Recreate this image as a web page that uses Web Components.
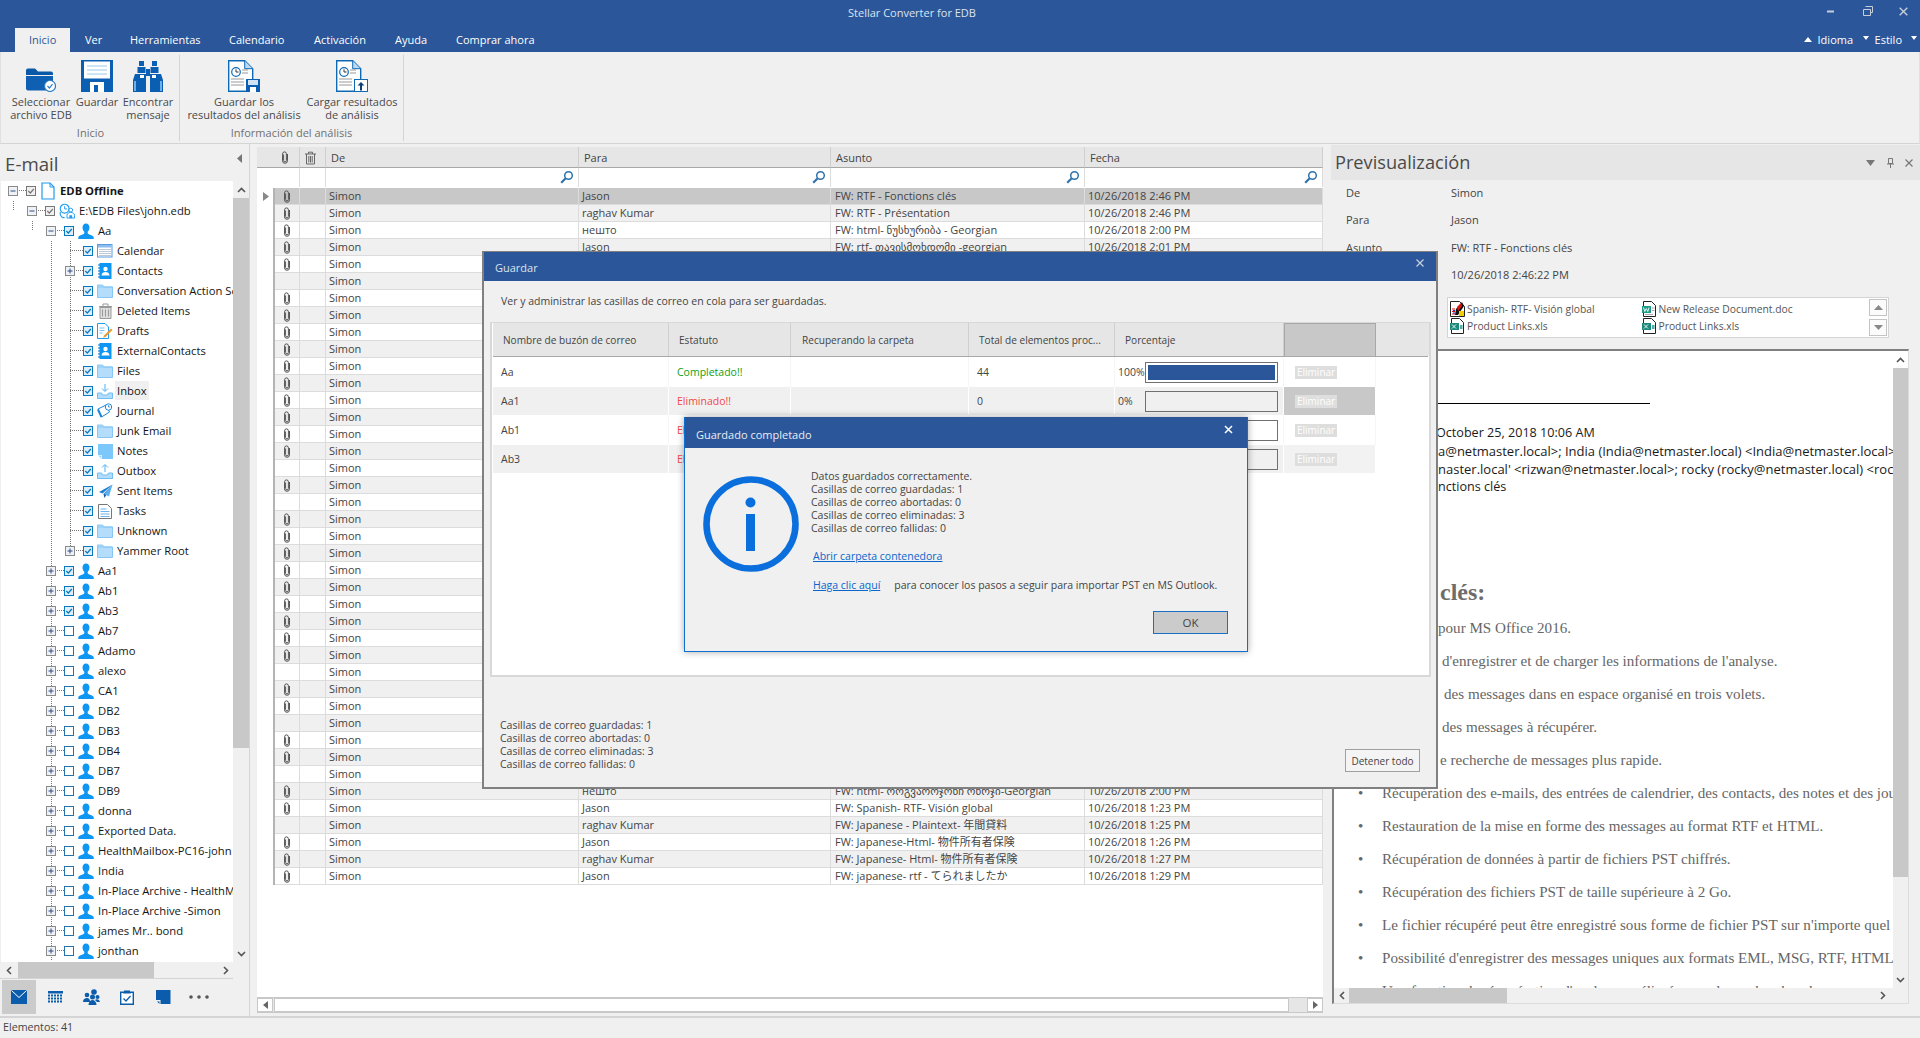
<!DOCTYPE html>
<html><head><meta charset="utf-8"><title>Stellar Converter for EDB</title>
<style>html,body{margin:0;height:100%;overflow:hidden;background:#f0f0f0}</style></head>
<body>
<app-window></app-window>
<script>
const I = {
 chevU:'<svg width="9" height="6" viewBox="0 0 9 6"><path d="M1 5l3.5-3.5L8 5" fill="none" stroke="#555" stroke-width="1.6"/></svg>',
 chevD:'<svg width="9" height="6" viewBox="0 0 9 6"><path d="M1 1l3.5 3.5L8 1" fill="none" stroke="#555" stroke-width="1.6"/></svg>',
 chevL:'<svg width="6" height="9" viewBox="0 0 6 9"><path d="M5 1L1.5 4.5 5 8" fill="none" stroke="#555" stroke-width="1.6"/></svg>',
 chevR:'<svg width="6" height="9" viewBox="0 0 6 9"><path d="M1 1l3.5 3.5L1 8" fill="none" stroke="#555" stroke-width="1.6"/></svg>',
 clip:'<svg width="8" height="13" viewBox="0 0 8 13"><path d="M2.6 3.5v6a1.3 1.3 0 0 0 2.8 0V2.8a1.9 1.9 0 0 0-3.8 0l-.1 7a2.5 2.5 0 0 0 5 0V3" fill="none" stroke="#555" stroke-width="1"/></svg>',
 trash:'<svg width="13" height="14" viewBox="0 0 13 14"><path d="M1 3h11M4.5 3V1.200h4V3M2.500 3v10h8V3M4.800 5v6.500M6.500 5v6.500M8.200 5v6.500" fill="none" stroke="#666" stroke-width="1"/></svg>',
 mag:'<svg width="14" height="14" viewBox="0 0 14 14"><circle cx="8.500" cy="5.500" r="3.800" fill="#fff" stroke="#2f73ad" stroke-width="1.500"/><path d="M5.500 8.500L1.200 12.800" stroke="#2f73ad" stroke-width="2.200"/></svg>',
 person:'<svg width="16" height="17" viewBox="0 0 16 17"><path d="M8 0.500c2.200 0 3.500 1.700 3.500 4 0 1.800-.8 3.500-1.800 4.300v1.200c0 .6 1 1.200 3 1.900 1.800.7 3 1.400 3 2.300V16H.300v-1.800c0-.9 1.200-1.600 3-2.300 2-.7 3-1.300 3-1.900V8.800c-1-.8-1.800-2.500-1.800-4.300 0-2.300 1.300-4 3.500-4z" fill="#0f96f2"/></svg>',
 folder:'<svg width="16" height="14" viewBox="0 0 16 14"><path d="M.500 1h5l1.500 2h8.500v10.500H.500z" fill="#b4dcfb" stroke="#86c7f8"/><path d="M.500 3h15" stroke="#86c7f8"/></svg>',
 calendar:'<svg width="16" height="14" viewBox="0 0 16 14"><rect x=".500" y=".500" width="14.500" height="12.500" fill="#fff" stroke="#5b9be0"/><rect x="1" y="1" width="13.500" height="2.500" fill="#8ebcf0"/><path d="M2.500 5.500h11M2.500 7.500h11M2.500 9.500h11M2.500 11.500h11" stroke="#7d8fb0" stroke-dasharray="1 1"/></svg>',
 contacts:'<svg width="14" height="16" viewBox="0 0 14 16"><rect x="1.500" y="0" width="12" height="16" fill="#0f96f2"/><path d="M0 2h2M0 5h2M0 8h2M0 11h2M0 14h2" stroke="#0a6fc0"/><circle cx="7.500" cy="6" r="2.200" fill="#fff"/><path d="M3.500 12.500c0-2.500 2-3.500 4-3.500s4 1 4 3.500z" fill="#fff"/></svg>',
 trashG:'<svg width="15" height="16" viewBox="0 0 15 16"><path d="M1 3h13l-.2 1.500H1.200z" fill="#999"/><path d="M5 3V1h5v2" fill="none" stroke="#999"/><path d="M2 4.500h11V15.500H2z" fill="#ddd" stroke="#999"/><path d="M4.500 6.500v7M7.500 6.500v7M10.500 6.500v7" stroke="#999"/></svg>',
 drafts:'<svg width="16" height="16" viewBox="0 0 16 16"><path d="M.500.500h7.500l3.500 3.500v11.500h-11z" fill="#fff" stroke="#1f9cf0"/><path d="M2.500 5h5M2.500 7.500h5M2.500 10h3" stroke="#7cc0f5"/><path d="M14 5.500l1.500 1.500-7 7-2.300.8.800-2.300z" fill="#ef9a2e"/></svg>',
 inbox:'<svg width="16" height="15" viewBox="0 0 16 15"><path d="M8 0v7M5 4.500L8 7.500l3-3" fill="none" stroke="#4cb0f5" stroke-width="1"/><path d="M.500 9h4l1 2h5l1-2h4v5.500H.500z" fill="#b4dcfb" stroke="#6fbdf7"/></svg>',
 journal:'<svg width="16" height="16" viewBox="0 0 16 16"><path d="M1 6l8-4 3.500 7-8 5z" fill="#fff" stroke="#1c86d8"/><path d="M1 6.500l3.500 7.500" stroke="#1c86d8" stroke-width="2"/><circle cx="11.500" cy="4" r="3.200" fill="#fff" stroke="#1c86d8"/><path d="M11.500 2.200V4h1.600" fill="none" stroke="#1c86d8" stroke-width=".8"/></svg>',
 notes:'<svg width="15" height="15" viewBox="0 0 15 15"><path d="M0 0h15v15H4V11H0z" fill="#7cc8fb"/><path d="M0 11.500h3.500V15z" fill="#a8dafc"/></svg>',
 outbox:'<svg width="16" height="15" viewBox="0 0 16 15"><path d="M8 8V1M5 3.500L8 .5l3 3" fill="none" stroke="#4cb0f5"/><path d="M.500 9h4l1 2h5l1-2h4v5.500H.500z" fill="#b4dcfb" stroke="#6fbdf7"/></svg>',
 sent:'<svg width="15" height="15" viewBox="0 0 15 15"><path d="M14.500.500L1 8l3.500 1.500z" fill="#1d7fd0"/><path d="M14.500.500L5.500 10l1 4z" fill="#0f5ca0"/><path d="M14.500.500L6 10l5 2.500z" fill="#5fb0ef"/></svg>',
 tasks:'<svg width="14" height="15" viewBox="0 0 14 15"><path d="M.500.500h9l4 4v10h-13z" fill="#fff" stroke="#777"/><path d="M2.500 5h6M2.500 7.500h9M2.500 10h9M2.500 12.500h9" stroke="#6ab4ef"/></svg>',
 page:'<svg width="14" height="18" viewBox="0 0 14 18"><path d="M1 1h8l4 4v12H1z" fill="#fff" stroke="#1f9cf0" stroke-width="1.200"/><path d="M9 1v4h4" fill="none" stroke="#1f9cf0"/></svg>',
 edb:'<svg width="17" height="16" viewBox="0 0 17 16"><circle cx="6" cy="5.500" r="4.700" fill="#fff" stroke="#1f9cf0" stroke-width="1.200"/><path d="M6 2.800v3h2.500" fill="none" stroke="#1f9cf0"/><path d="M1.500 9c-1 2 .5 5 2.500 6h2" fill="none" stroke="#1f9cf0" stroke-width="1.200"/><circle cx="12.500" cy="7" r="2" fill="#fff" stroke="#1f9cf0"/><path d="M8.500 15.500v-3c0-2 2-3 4-3s4 1 4 3v3z" fill="#fff" stroke="#1f9cf0"/><path d="M11 15.500v-3h3v3" fill="#1f9cf0"/></svg>',
 rfolder:'<svg width="30" height="24" viewBox="0 0 30 24"><path d="M0 2.500Q0 .5 2 .5h7l3 3h13q2 0 2 2V7H0z" fill="#0a58a8"/><path d="M0 8h27v14.500H2q-2 0-2-2z" fill="#0f5fb2"/><circle cx="24" cy="18" r="5.500" fill="#fff" stroke="#2c7dc4" stroke-width="1.200"/><path d="M21.500 18l2 2 3-3.800" fill="none" stroke="#2c7dc4" stroke-width="1.200"/></svg>',
 rsave:'<svg width="32" height="32" viewBox="0 0 32 32"><path d="M0 0h32v32H0z" fill="#0b5fb3"/><rect x="3" y="1.500" width="26" height="17" fill="#fff"/><path d="M6 6h20M6 10h20M6 14h20" stroke="#9cc9ea" stroke-width="1.200"/><rect x="9" y="22" width="14" height="10" fill="#fff"/><rect x="13" y="25" width="4" height="7" fill="#0b5fb3"/></svg>',
 rbino:'<svg width="32" height="31" viewBox="0 0 32 31"><path d="M7 0h5v5h-5zM20 0h5v5h-5z" fill="#0b5fb3"/><path d="M5.500 6h8v6h-8zM18.500 6h8v6h-8z" fill="#0b5fb3"/><path d="M14 8h4v7h-4z" fill="#0b5fb3"/><path d="M3 13h11v18H1V19z" fill="#0b5fb3"/><path d="M18 13h11l2 6v12H18z" fill="#0b5fb3"/><path d="M3 20v10M29 20v10" stroke="#6fb0e8" stroke-width="2"/><path d="M8 14h4v3H8zM20 14h4v3h-4z" fill="#fff"/></svg>',
 rdoc(k){return `<svg width="32" height="32" viewBox="0 0 32 32"><path d="M.700.700h16l8 8V31.300H.700z" fill="#fff" stroke="#0f6ab5" stroke-width="1.400"/><path d="M16.700.700v8h8" fill="#bcd9f0" stroke="#0f6ab5"/><circle cx="8" cy="12" r="4.300" fill="#fff" stroke="#0f6ab5" stroke-width="1.200"/><path d="M8 9.300V12h2.500" fill="none" stroke="#333"/><path d="M14 10h6M14 13h6M3 19h13M3 22h13M3 25h13" stroke="#9a9a9a" stroke-width="1.200"/>${k=='s'
  ?'<rect x="18" y="19" width="14" height="13" fill="#0b5fb3"/><rect x="20" y="20" width="10" height="5" fill="#cfe5f5"/><rect x="22" y="27" width="6" height="5" fill="#fff"/>'
  :'<rect x="18.500" y="19.500" width="13" height="12" fill="#fff" stroke="#0f6ab5"/><path d="M25 22l-3.500 3.500H24v5h2v-5h2.500z" fill="#0b3f7a"/>'}</svg>`},
 navMail:'<svg width="16" height="14" viewBox="0 0 16 14"><path d="M0 0h16v14H0z" fill="#0b5cad"/><path d="M.500.500L8 7.500 15.500.500" fill="none" stroke="#fff"/></svg>',
 navCal:'<svg width="15" height="13" viewBox="0 0 15 13"><path d="M0 0h15v2.500H0z" fill="#0b5cad"/><path d="M0 4.500h15M0 7.500h15M0 10.500h15" stroke="#0b5cad" stroke-width="2" stroke-dasharray="2 1"/></svg>',
 navPpl:'<svg width="17" height="16" viewBox="0 0 17 16"><circle cx="11" cy="3" r="2.800" fill="#0b5cad"/><circle cx="4" cy="6" r="2.300" fill="#0b5cad"/><circle cx="9.500" cy="8" r="2.500" fill="#0b5cad"/><circle cx="14.500" cy="8" r="2" fill="#0b5cad"/><path d="M0 13c0-3 2-4 4-4s3 1 3 4zM5.500 16c0-3 2-5 4-5s4 2 4 5zM12 11c1-1 4-1.500 5 2h-3z" fill="#0b5cad"/></svg>',
 navTask:'<svg width="14" height="15" viewBox="0 0 14 15"><path d="M.700 2.200h12.600v12.100H.700z" fill="#fff" stroke="#0b5cad" stroke-width="1.400"/><path d="M4 2V.500h6V2l1 1.500H3z" fill="#0b5cad"/><path d="M3.500 8.500l2.500 2.500 4.500-5" fill="none" stroke="#0b5cad" stroke-width="1.300"/></svg>',
 navNote:'<svg width="15" height="14" viewBox="0 0 15 14"><path d="M0 0h14.500v14H4.500v-4H0z" fill="#0b5cad"/><path d="M1 11.500h2.500V14z" fill="#0b5cad"/></svg>',
 navDots:'<svg width="20" height="4" viewBox="0 0 20 4"><circle cx="2" cy="2" r="1.800" fill="#555"/><circle cx="10" cy="2" r="1.800" fill="#555"/><circle cx="18" cy="2" r="1.800" fill="#555"/></svg>',
 attRtf:'<svg width="15" height="16" viewBox="0 0 15 16"><path d="M.500.500h9l5 5V15.500H.500z" fill="#fff" stroke="#222"/><path d="M6 8l6-7 2 4-6 9H5z" fill="#111"/><path d="M7 6l4-4 1 3-4 5z" fill="#e01010"/><path d="M2 8h3M2 10.500h3M2 13h3" stroke="#e01010"/><path d="M9 10h5v5H9z" fill="#f0d000"/><path d="M3 9.500h2M3 12h2" stroke="#1030d0"/></svg>',
 attDoc:'<svg width="15" height="16" viewBox="0 0 15 16"><path d="M1.500.500h8l4 4V15.500h-12z" fill="#fff" stroke="#222"/><rect x="0" y="5" width="9" height="7" fill="#1d9b86"/><path d="M1.500 6.500l1.300 4 1.500-3 1.500 3 1.300-4" fill="none" stroke="#fff" stroke-width=".9"/><path d="M10 7h2.500M10 9.500h2.500M3 13.500h8" stroke="#aaa"/></svg>',
 attXls:'<svg width="15" height="16" viewBox="0 0 15 16"><path d="M1.500.500h8l4 4V15.500h-12z" fill="#fff" stroke="#222"/><rect x="0" y="5" width="9" height="7" fill="#1d8a7a"/><path d="M2 6.500l4 4M6 6.500l-4 4" stroke="#fff" stroke-width=".9"/><path d="M10 7h2.500v4H10z" fill="#5aa" /></svg>'
};
function def(name, render){
  customElements.define(name, class extends HTMLElement{
    constructor(){super();this.attachShadow({mode:'open'});}
    connectedCallback(){this.shadowRoot.innerHTML=render(this);}
  });
}
def('title-bar',()=>`<style>
:host{display:block;background:#2b579a;height:52px;color:#fff;font-size:11px;flex:none}
.top{display:flex;height:28px;align-items:center;color:#dbe3ef}
.t{margin-left:848px;width:130px;white-space:nowrap;margin-top:-3px}
.ctl{margin-left:auto;display:flex;align-items:center;margin-right:12px;margin-top:-6px}
.tabs{display:flex;height:24px;padding-left:15px}
.tab{padding:4px 0 0 15px;box-sizing:border-box;white-space:nowrap;color:#fff}
.on{background:#f0f0f0;color:#2b579a;padding-left:14px}
.r{margin-left:auto;display:flex;align-items:center;padding-bottom:1px;padding-right:3px}
</style>
<div class="top"><div class="t">Stellar Converter for EDB</div>
<div class="ctl">
<svg width="8" height="3" viewBox="0 0 8 3" style="margin-right:28px"><path d="M0 1.500h7" stroke="#c8cfdc" stroke-width="2"/></svg>
<svg width="10" height="10" viewBox="0 0 10 10" style="margin-right:26px"><path d="M2.500.500h7v6h-2M.500 3.500h7v6h-7z" fill="none" stroke="#c8cfdc"/></svg>
<svg width="9" height="9" viewBox="0 0 9 9"><path d="M.700.700l7.600 7.600M8.300.700L.700 8.300" stroke="#c8cfdc" stroke-width="1.400"/></svg>
</div></div>
<div class="tabs">
<div class="tab on" style="width:55px">Inicio</div><div class="tab" style="width:45px">Ver</div><div class="tab" style="width:99px">Herramientas</div><div class="tab" style="width:85px">Calendario</div><div class="tab" style="width:81px">Activación</div><div class="tab" style="width:61px">Ayuda</div><div class="tab" style="width:110px">Comprar ahora</div>
<div class="r">
<svg width="8" height="5" viewBox="0 0 8 5" style="margin-right:6px"><path d="M4 0l4 5H0z" fill="#fff"/></svg><span style="width:34px;white-space:nowrap">Idioma</span>
<svg width="6" height="4" viewBox="0 0 6 4" style="margin:0 6px 0 11px;position:relative;top:-2px"><path d="M0 0h6L3 4z" fill="#fff"/></svg><span>Estilo</span>
<svg width="6" height="4" viewBox="0 0 6 4" style="margin-left:9px;position:relative;top:-2px"><path d="M0 0h6L3 4z" fill="#fff"/></svg>
</div></div>`);
def('ribbon-bar',()=>{
 const b=(w,ic,l)=>`<div class="b" style="width:${w}px"><div class="ic">${ic}</div><div class="l">${l}</div></div>`;
 return `<style>
:host{display:flex;height:92px;background:#f0f0f0;border-bottom:1px solid #d4d4d4;box-sizing:border-box;flex:none;padding-left:1px;border-left:1px solid #e0e0e0;border-right:1px solid #e0e0e0;color:#4a4a4a;font-size:11px}
.g{display:flex;flex-direction:column;border-right:1px solid #d4d4d4;margin:3px 0 2px;box-sizing:border-box}
.row{display:flex;flex:1;padding-top:5px}
.b{text-align:center;white-space:nowrap}
.ic{height:32px;display:flex;align-items:flex-end;justify-content:center}
.l{line-height:13px;margin-top:3px}
.gl{text-align:center;height:16px;line-height:15px;color:#707070}
</style>
<div class="g" style="width:178px;padding-left:7px"><div class="row">${b(64,I.rfolder,'Seleccionar<br>archivo EDB')}${b(48,I.rsave,'Guardar')}${b(54,I.rbino,'Encontrar<br>mensaje')}</div><div class="gl" style="padding-right:7px">Inicio</div></div>
<div class="g" style="width:224px;padding-left:5px"><div class="row">${b(118,I.rdoc('s'),'Guardar los<br>resultados del análisis')}${b(98,I.rdoc('u'),'Cargar resultados<br>de análisis')}</div><div class="gl" style="padding-right:5px">Información del análisis</div></div>`});
def('tree-row',h=>{
 const lv=+h.getAttribute('lv'), icon=h.getAttribute('icon'), exp=h.getAttribute('exp')||'', cb=h.getAttribute('cb'), t=h.getAttribute('t'), bold=h.hasAttribute('bold'), sel=h.hasAttribute('sel');
 const d='repeating-linear-gradient(#777 0 1px,transparent 1px 2px)', dh='repeating-linear-gradient(90deg,#777 0 1px,transparent 1px 2px)';
 const bg=[`${dh} ${12+19*lv}px 9px/13px 1px no-repeat`];
 (h.getAttribute('v')||'').split(' ').filter(Boolean).forEach(s=>{const[x,m]=s.split(':');const X=12+19*x;
   if(m=='t')bg.push(`${d} ${X}px 0/1px 10px no-repeat`);else if(m=='b')bg.push(`${d} ${X}px 10px/1px 10px no-repeat`);else bg.push(`${d} ${X}px 0/1px 20px no-repeat`);});
 const eb=exp?`<svg class="e" width="10" height="10" viewBox="0 0 10 10"><rect x=".5" y=".5" width="9" height="9" fill="#eef1f6" stroke="#8a8a8a"/><path d="M2.500 5h5${exp=='+'?'M5 2.500v5':''}" stroke="#2e4a80"/></svg>`:'<span class="e"></span>';
 const cbs={g:'<rect x=".5" y=".5" width="9" height="9" fill="#f0f0f0" stroke="#777"/><path d="M2.300 5l2 2 3.500-4" fill="none" stroke="#777" stroke-width="1.200"/>',c:'<rect x=".5" y=".5" width="9" height="9" fill="#dceefb" stroke="#0a78bc"/><path d="M2.300 5l2 2 3.500-4" fill="none" stroke="#0a78bc" stroke-width="1.200"/>',u:'<rect x=".5" y=".5" width="9" height="9" fill="#fff" stroke="#2472a8"/>'};
 return `<style>:host{display:flex;height:20px;align-items:center;padding-left:${7+19*lv}px;background:${bg.join(',')};white-space:nowrap;font-size:11.250px;color:#151515;font-weight:${bold?700:400}}
.e{width:10px;height:10px;margin-right:8px;flex:none}
.c{flex:none;margin-right:4px}.i{width:16px;height:20px;display:flex;align-items:center;justify-content:center;margin-right:4px;flex:none}
.t{margin-top:-2px;${sel?'background:#f0f0f0;padding:2px 2px;margin-left:-2px':''}}
</style>${eb}<svg class="c" width="10" height="10" viewBox="0 0 10 10">${cbs[cb]}</svg><span class="i">${I[icon]}</span><span class="t">${t}</span>`});
def('nav-pane',()=>{
 const kids=[['Calendar','calendar'],['Contacts','contacts','+'],['Conversation Action Settings','folder'],['Deleted Items','trashG'],['Drafts','drafts'],['ExternalContacts','contacts'],['Files','folder'],['Inbox','inbox'],['Journal','journal'],['Junk Email','folder'],['Notes','notes'],['Outbox','outbox'],['Sent Items','sent'],['Tasks','tasks'],['Unknown','folder'],['Yammer Root','folder','+']];
 const tops=['Aa1','Ab1','Ab3','Ab7','Adamo','alexo','CA1','DB2','DB3','DB4','DB7','DB9','donna','Exported Data.','HealthMailbox-PC16-john','India','In-Place Archive - HealthMailbox','In-Place Archive -Simon','james Mr.. bond','jonthan'];
 let r=`<tree-row lv="0" icon="page" exp="-" cb="g" t="EDB Offline" bold></tree-row><tree-row lv="1" icon="edb" exp="-" cb="g" v="0:t" t="E:\\EDB Files\\john.edb"></tree-row><tree-row lv="2" icon="person" exp="-" cb="c" v="1:t" t="Aa"></tree-row>`;
 kids.forEach((k,i)=>r+=`<tree-row lv="3" icon="${k[1]}" exp="${k[2]||''}" cb="c" v="2 3${i==15?':t':''}" t="${k[0]}"${k[0]=='Inbox'?' sel':''}></tree-row>`);
 tops.forEach((t,i)=>r+=`<tree-row lv="2" icon="person" exp="+" cb="${i<3?'c':'u'}" v="2" t="${t}"></tree-row>`);
 const nav=[I.navMail,I.navCal,I.navPpl,I.navTask,I.navNote,I.navDots].map((x,i)=>`<div class="n${i==0?' on':''}">${x}</div>`).join('');
 return `<style>
:host{display:flex;flex-direction:column;width:250px;flex:none;border-right:1px solid #d4d4d4;box-sizing:border-box}
h2{font:400 18.700px/37px "Open Sans",sans-serif;margin:0;height:37px;padding:1px 6px 0 5px;box-sizing:border-box;color:#4a4a4a;display:flex;justify-content:space-between;align-items:center}
.mid{display:flex;height:781px;padding-left:1px}
.tree{width:232px;background:#fff;overflow:hidden}
.vs{width:16px;display:flex;flex-direction:column;background:#f0f0f0}
.a{height:17px;display:flex;align-items:center;justify-content:center;flex:none}
.th{height:550px;background:#c8c8c8;flex:none}.sp{flex:1}
.hs{display:flex;height:16px;width:233px;align-items:center;background:#f0f0f0;border-bottom:1px solid #d4d4d4;box-sizing:content-box}
.hs .l{width:18px;display:flex;justify-content:center}.hs .tm{width:136px;height:100%;background:#c8c8c8}.hs .f{flex:1;display:flex;justify-content:flex-end;padding-right:4px}
.nav{display:flex;height:36px;padding:1px 0 0 2px;box-sizing:border-box}
.n{width:36px;height:34px;display:flex;align-items:center;justify-content:center;flex:none}.on{background:#cbcbcb;width:34px;margin-right:2px}
.n:not(.on){margin-left:-1px;margin-right:1px}
</style>
<h2>E-mail<svg width="6" height="9" viewBox="0 0 6 9" style="margin-top:-9px"><path d="M5 0v9L0 4.500z" fill="#777"/></svg></h2>
<div class="mid"><div class="tree">${r}</div><div class="vs"><div class="a">${I.chevU}</div><div class="th"></div><div class="sp"></div><div class="a">${I.chevD}</div></div></div>
<div class="hs"><div class="l">${I.chevL}</div><div class="tm"></div><div class="f">${I.chevR}</div></div>
<div class="nav">${nav}</div>`});
const COLS='18px 25px 26px 253px 252px 254px 238px';
def('mail-row',h=>{
 const g=n=>h.getAttribute(n)||'';
 const sel=h.hasAttribute('sel'), bg=sel?'#c8c8c8':(h.hasAttribute('alt')?'#f0f0f0':'#fff');
 return `<style>:host{display:grid;grid-template-columns:${COLS};height:17px;font-size:11px;line-height:16px;color:#444;white-space:nowrap;flex:none}
div{border-right:1px solid #dcdcdc;border-bottom:1px solid #dcdcdc;background:${bg};padding-left:3px;overflow:hidden;box-sizing:border-box}
.ind{background:#fff;border-right:2px solid #b4b4b4;border-bottom:0;display:flex;align-items:center;padding-left:6px}
.cl{display:flex;align-items:center;justify-content:center;padding:0}
</style><div class="ind">${sel?'<svg width="6" height="9" viewBox="0 0 6 9"><path d="M0 0l6 4.500L0 9z" fill="#888"/></svg>':''}</div><div class="cl">${h.hasAttribute('clip')?I.clip:''}</div><div></div><div>Simon</div><div>${g('to')}</div><div style="padding-left:4px">${g('sub')}</div><div style="padding-left:3px">${g('date')}</div>`});
def('mail-grid',()=>{
 const noClip=new Set([5,16,18,28,31,34,37]);
 const data={0:['Jason','FW: RTF - Fonctions clés','10/26/2018 2:46 PM'],1:['raghav Kumar','FW: RTF - Présentation','10/26/2018 2:46 PM'],2:['нешто','FW: html- ნუსხურიბა - Georgian','10/26/2018 2:00 PM'],3:['Jason','FW: rtf- თავისმოხდომი -georgian','10/26/2018 2:01 PM'],35:['нешто','FW: html- ოოგვაოოჯონჩ ონრჯი-Georgian','10/26/2018 2:00 PM'],36:['Jason','FW: Spanish- RTF- Visión global','10/26/2018 1:23 PM'],37:['raghav Kumar','FW: Japanese - Plaintext- 年間貸料','10/26/2018 1:25 PM'],38:['Jason','FW: Japanese-Html- 物件所有者保険','10/26/2018 1:26 PM'],39:['raghav Kumar','FW: Japanese- Html- 物件所有者保険','10/26/2018 1:27 PM'],40:['Jason','FW: japanese- rtf - てられましたか','10/26/2018 1:29 PM']};
 let rows='';
 for(let i=0;i<41;i++){const d=data[i]||['','',''];rows+=`<mail-row ${i==0?'sel':''} ${i%2?'alt':''} ${noClip.has(i)?'':'clip'} to="${d[0]}" sub="${d[1]}" date="${d[2]}"></mail-row>`;}
 const head=['','<span class="m">'+I.clip+'</span>','<span class="m" style="margin-left:-1px">'+I.trash+'</span>','De','Para','Asunto','Fecha'].map(x=>`<div>${x}</div>`).join('');
 const filt=['','','',I.mag,I.mag,I.mag,I.mag].map(x=>`<div class="f">${x}</div>`).join('');
 return `<style>
:host{display:flex;flex-direction:column;width:1066px;flex:none;margin:3px 8px 3px 7px;background:#fff;color:#444;font-size:11px}
.g{display:grid;grid-template-columns:${COLS}}
.h{height:21px}.h div{background:#e6e6e6;border-bottom:1px solid #a8a8a8;border-right:1px solid #cfcfcf;padding:1px 0 0 5px;line-height:20px;box-sizing:border-box;overflow:hidden;display:flex;align-items:center}
.h div:first-child{border-right:0}.h div:nth-child(2){border-left:0}
.m{display:flex;margin-left:1px}
.fr{height:20px}.f{border-right:1px solid #dcdcdc;display:flex;justify-content:flex-end;align-items:center;padding:0 4px 2px 0;height:19px;box-sizing:border-box}.f:first-child{border-right:0}
.rows{flex:1;display:flex;flex-direction:column;overflow:hidden}
.hs{display:flex;background:#e6e6e6;border-top:1px solid #c8c8c8;border-bottom:1px solid #c8c8c8;box-sizing:content-box;height:14px;flex:none}
.x{width:16px;display:flex;align-items:center;justify-content:center;background:#fff;border:1px solid #c8c8c8;box-sizing:border-box;flex:none}
.trk{flex:1;background:#e6e6e6;display:flex;padding-right:18px}.trk div{flex:1;background:#fff;border:1px solid #c8c8c8;margin-left:1px;box-sizing:border-box}
</style><div class="g h">${head}</div><div class="g fr">${filt}</div><div class="rows">${rows}</div>
<div class="hs"><div class="x"><svg width="5" height="8" viewBox="0 0 5 8"><path d="M5 0v8L0 4z" fill="#666"/></svg></div><div class="trk"><div></div></div><div class="x"><svg width="5" height="8" viewBox="0 0 5 8"><path d="M0 0v8l5-4z" fill="#666"/></svg></div></div>`});
def('preview-pane',()=>{
 const ss=['d\'enregistrer et de charger les informations de l\'analyse.','des messages dans en espace organisé en trois volets.','des messages à récupérer.','e recherche de messages plus rapide.'];
 const li=['Récupération des e-mails, des entrées de calendrier, des contacts, des notes et des journaux','Restauration de la mise en forme des messages au format RTF et HTML.','Récupération de données à partir de fichiers PST chiffrés.','Récupération des fichiers PST de taille supérieure à 2 Go.','Le fichier récupéré peut être enregistré sous forme de fichier PST sur n\'importe quel ordinateur','Possibilité d\'enregistrer des messages uniques aux formats EML, MSG, RTF, HTML et PDF','Une fonction de récupération d\'analyse améliorée pour les recherches de messages'];
 return `<style>
:host{display:flex;flex-direction:column;flex:1;min-width:0;font-size:11px;color:#444;padding-top:1px;box-sizing:border-box}
.hd{height:35px;background:#e6e6e6;display:flex;align-items:center;padding-left:4px;flex:none;color:#4a4a4a;font-size:18.200px}
.hd span{flex:1;margin-top:-1px}.hd svg{margin-right:11px}
.wrap{padding-right:11px;padding-bottom:12px;flex:1;display:flex;flex-direction:column;min-height:0}
.fld{height:169px;flex:none;padding-top:1px;box-sizing:border-box}
.r{display:flex;height:22px;align-items:center;margin-bottom:5.660px}.r b{font-weight:400;width:105px;padding-left:15px;box-sizing:content-box}
.att{margin:11px 0 0 116px;width:442px;height:41px;border:1px solid #d4d4d4;background:#fff;box-sizing:border-box;display:flex}
.ag{flex:1;display:grid;grid-template-columns:191.500px 1fr;grid-auto-rows:17px;padding:3px 0 0 2px;box-sizing:border-box}
.ag div{display:flex;align-items:center;gap:2px;white-space:nowrap;color:#555;font-size:10.300px}
.sb{width:18px;margin-right:1px;display:flex;flex-direction:column;justify-content:space-between;padding:1px 0}
.sb div{height:17px;background:#fbfbfb;border:1px solid #c4c4c4;box-sizing:border-box;display:flex;align-items:center;justify-content:center}
.body{flex:1;min-height:0;margin-left:1px;border-top:2px solid #808080;border-left:2px solid #808080;border-right:1px solid #dcdcdc;border-bottom:1px solid #dcdcdc;display:flex;flex-direction:column;background:#fff}
.up{flex:1;display:flex;min-height:0}
.ct{flex:1;min-width:0;overflow:hidden;white-space:nowrap}
.vs{width:15px;background:#f0f0f0;display:flex;flex-direction:column;flex:none}
.vs .a{height:17px;display:flex;align-items:center;justify-content:center;background:#fff}.vs .th{height:509px;background:#c8c8c8}.vs .sp{flex:1}
.hs{height:15px;display:flex;align-items:center;background:#f0f0f0;flex:none}
.hs .a{width:15px;display:flex;justify-content:center}.hs .th{width:158px;height:100%;background:#c8c8c8}.hs .sp{flex:1}
hr{margin:52px 0 20px 11px;width:305px;height:1px;background:#000;border:0}
.sn{font:13px/18px "Open Sans",sans-serif;color:#1a1a1a;height:18px}
h3{font:700 24px/33px "Liberation Serif",serif;color:#6d6d6d;margin:80px 0 0 106px;height:33px}
.p{font:15.100px/33px "Liberation Serif",serif;color:#666;height:33px}
.ps{height:3px}
.li{font:15.100px/33px "Liberation Serif",serif;color:#666;height:33px;margin-left:24px;display:flex}.li i{font-style:normal;width:24px;flex:none}
</style>
<div class="hd"><span>Previsualización</span>
<svg width="9" height="6" viewBox="0 0 9 6"><path d="M0 0h9L4.500 6z" fill="#777"/></svg>
<svg width="7" height="10" viewBox="0 0 7 10" style="margin-left:1px"><path d="M1.500.500h4v5h-4zM0 6h7M3.500 6v4" fill="none" stroke="#777"/></svg>
<svg width="8" height="8" viewBox="0 0 8 8" style="margin-right:7px"><path d="M.5.500l7 7M7.500.500l-7 7" stroke="#777" stroke-width="1.200"/></svg></div>
<div class="wrap"><div class="fld">
<div class="r"><b>De</b><span>Simon</span></div><div class="r"><b>Para</b><span>Jason</span></div><div class="r"><b>Asunto</b><span>FW: RTF - Fonctions clés</span></div><div class="r"><b></b><span>10/26/2018 2:46:22 PM</span></div>
<div class="att"><div class="ag"><div>${I.attRtf}Spanish- RTF- Visión global</div><div>${I.attDoc}New Release Document.doc</div><div>${I.attXls}Product Links.xls</div><div>${I.attXls}Product Links.xls</div></div>
<div class="sb"><div><svg width="9" height="5" viewBox="0 0 9 5"><path d="M4.500 0l4.500 5H0z" fill="#888"/></svg></div><div><svg width="9" height="5" viewBox="0 0 9 5"><path d="M0 0h9L4.500 5z" fill="#888"/></svg></div></div></div>
</div>
<div class="body"><div class="up"><div class="ct"><hr>
<div class="sn" style="padding-left:102px;font-size:12.600px">October 25, 2018 10:06 AM</div>
<div class="sn" style="padding-left:104px">a@netmaster.local&gt;; India (India@netmaster.local) &lt;India@netmaster.local&gt;</div>
<div class="sn" style="padding-left:104px">naster.local' &lt;rizwan@netmaster.local&gt;; rocky (rocky@netmaster.local) &lt;rocky</div>
<div class="sn" style="padding-left:104px;font-size:12.600px">nctions clés</div>
<h3>clés:</h3><div class="ps"></div>
<div class="p" style="padding-left:104px">pour MS Office 2016.</div>
<div class="p" style="padding-left:108px">${ss[0]}</div><div class="p" style="padding-left:110px">${ss[1]}</div><div class="p" style="padding-left:108px">${ss[2]}</div><div class="p" style="padding-left:106px">${ss[3]}</div>
${li.map(t=>`<div class="li"><i>•</i><span>${t}</span></div>`).join('')}
</div><div class="vs"><div class="a">${I.chevU}</div><div class="th"></div><div class="sp"></div><div class="a" style="background:none">${I.chevD}</div></div></div>
<div class="hs"><div class="a">${I.chevL}</div><div class="th"></div><div class="sp"></div><div class="a" style="margin-right:18px">${I.chevR}</div></div></div>
</div>`});
def('status-bar',()=>`<style>:host{display:flex;align-items:center;height:22px;border-top:2px solid #d4d4d4;box-sizing:border-box;padding:0 0 2px 3px;font-size:10.700px;color:#444;flex:none;background:#f0f0f0}</style>Elementos: 41`);
def('save-dialog',()=>{
 const COL='176px 122px 178px 146px 169px 92px 53px';
 const row=(n,s,c,t,pc,bar,alt,hi)=>`<div class="tr${alt?' alt':''}"><div>${n}</div><div style="color:${c}">${s}</div><div></div><div class="n">${t}</div><div class="pc"><span>${pc}</span><i class="bar"${alt?' style="background:#f0f0f0"':''}>${bar?'<u></u>':''}</i></div><div class="del${hi?' hi':''}"><em>Eliminar</em></div><div class="nb"></div></div>`;
 return `<style>
:host{position:absolute;left:482px;top:251px;width:956px;height:538px;display:flex;flex-direction:column;background:#f0f0f0;border:2px solid #808080;border-top-width:1px;box-sizing:border-box;color:#444;font-size:10.500px;z-index:1}
.ti{height:29px;background:#2b579a;color:#dbe3ef;display:flex;align-items:center;justify-content:space-between;padding:2px 12px 0 11px;box-sizing:border-box;font-size:11px;flex:none}
.ti svg{margin-top:-9px}
.s{height:20px;line-height:20px;margin:10px 0 0 17px;flex:none}
.tb{margin:11px 0 0 6px;width:941px;height:355px;border:2px solid #d8d8d8;border-top-width:1px;box-sizing:border-box;background:#fff;flex:none;padding:0 1px}
.hr{display:grid;grid-template-columns:${COL};height:33px;border-bottom:1px solid #a8a8a8;box-sizing:content-box;font-size:10.100px}
.hr div{background:#e6e6e6;border-right:1px solid #cfcfcf;padding:1px 0 0 10px;display:flex;align-items:center;white-space:nowrap;box-sizing:border-box;overflow:hidden}
.hr .e{background:#c8c8c8;border:1px solid #a8a8a8;border-bottom:0}.hr div:last-child{border:0}
.tr{display:grid;grid-template-columns:${COL};height:28px;align-items:stretch}
.tr:nth-child(odd){height:30px}
.tr>div{padding-left:8px;display:flex;align-items:center;box-sizing:border-box;border-right:1px solid #f6f6f6;white-space:nowrap}
.tr.alt>div{background:#f0f0f0;border-right-color:#fff}
.tr .nb,.tr.alt .nb{background:#fff;border:0}
.tr .n{padding-left:8px}
.tr .pc{padding-left:3px;justify-content:space-between;padding-right:5px}
.bar{display:block;width:133px;height:21px;border:1px solid #707070;background:#fff;box-sizing:border-box;padding:1px}
.bar u{display:block;height:100%;background:#2b579a;border:1px solid #fff;box-sizing:border-box}
.del{padding-left:11px!important}.del em{font-style:normal;background:#dedede;color:#fff;padding:0 2px;font-size:10px;line-height:13px;height:13px;width:42px;box-sizing:border-box;display:block;text-align:left}
.tr.alt .del.hi{background:#c8c8c8}
.tr.alt .del:not(.hi){background:#f2f2f2}
.fo{display:flex;flex:1;align-items:flex-end;justify-content:space-between;padding:0 16px 15px 16px}
.fo .tx{line-height:13px;margin-bottom:1px}
.btn{width:75px;height:23px;border:1px solid #a0a0a0;background:#f4f4f4;display:flex;align-items:center;justify-content:center;box-sizing:border-box;font-size:10px}
</style><div class="ti"><span>Guardar</span><svg width="8" height="8" viewBox="0 0 8 8"><path d="M.5.500l7 7M7.500.500l-7 7" stroke="#c8cfdc" stroke-width="1.200"/></svg></div>
<div class="s">Ver y administrar las casillas de correo en cola para ser guardadas.</div>
<div class="tb"><div class="hr"><div>Nombre de buzón de correo</div><div>Estatuto</div><div style="padding-left:11px">Recuperando la carpeta</div><div>Total de elementos proc...</div><div>Porcentaje</div><div class="e"></div><div></div></div>
<div class="rows">${row('Aa','Completado!!','#12a012','44','100%',1,0,0)}${row('Aa1','Eliminado!!','#f04848','0','0%',0,1,1)}${row('Ab1','Eliminado!!','#f04848','0','0%',0,0,0)}${row('Ab3','Eliminado!!','#f04848','0','0%',0,1,0)}</div></div>
<div class="fo"><div class="tx">Casillas de correo guardadas: 1<br>Casillas de correo abortadas: 0<br>Casillas de correo eliminadas: 3<br>Casillas de correo fallidas: 0</div><div class="btn">Detener todo</div></div>`});
def('done-dialog',()=>`<style>
:host{position:absolute;left:684px;top:417px;width:564px;height:235px;display:flex;flex-direction:column;background:#f0f0f0;border:1px solid #0f6fd0;border-top-color:#2b579a;box-sizing:border-box;color:#444;font-size:10.500px;z-index:2;box-shadow:0 0 7px rgba(0,0,0,.35)}
.ti{height:30px;background:#2b579a;color:#e8edf5;display:flex;align-items:center;justify-content:space-between;padding:3px 14px 0 11px;box-sizing:border-box;font-size:11px;flex:none}
.ti svg{margin-top:-10px}
.b{display:flex;flex:1}
.ic{margin:28px 0 0 18px;flex:none}
.c{margin-left:12px;padding-top:21.500px;line-height:13px;flex:1;white-space:nowrap}
a{color:#0a66cc;text-decoration:underline}
.l1{margin:15px 0 0 2px}.l2{margin:16px 0 0 2px;display:flex}.l2 span{margin-left:14px}
.ok{margin:19px 19px 0 auto;width:75px;height:23px;background:#cbcbcb;border:1px solid #1a6fc4;box-sizing:border-box;display:flex;align-items:center;justify-content:center;font-size:11.500px}
</style><div class="ti"><span>Guardado completado</span><svg width="9" height="9" viewBox="0 0 9 9"><path d="M1 1l7 7M8 1L1 8" stroke="#fff" stroke-width="1.500"/></svg></div>
<div class="b"><svg class="ic" width="96" height="96" viewBox="0 0 96 96"><circle cx="48" cy="48" r="44.500" fill="none" stroke="#0a6fdc" stroke-width="6.600"/><circle cx="47.500" cy="26.500" r="5" fill="#0a6fdc"/><rect x="43" y="38" width="9" height="37" fill="#0a6fdc"/></svg>
<div class="c">Datos guardados correctamente.<br>Casillas de correo guardadas: 1<br>Casillas de correo abortadas: 0<br>Casillas de correo eliminadas: 3<br>Casillas de correo fallidas: 0
<div class="l1"><a>Abrir carpeta contenedora</a></div><div class="l2"><a>Haga clic aquí</a><span>para conocer los pasos a seguir para importar PST en MS Outlook.</span></div>
<div class="ok">OK</div></div></div>`);
def('app-window',()=>`<style>
:host{display:flex;flex-direction:column;width:1920px;height:1038px;position:relative;font-family:"Open Sans","Noto Sans CJK JP","DejaVu Sans",sans-serif;background:#f0f0f0;overflow:hidden}
.main{display:flex;height:872px;flex:none}
</style><title-bar></title-bar><ribbon-bar></ribbon-bar><div class="main"><nav-pane></nav-pane><mail-grid></mail-grid><preview-pane></preview-pane></div><status-bar></status-bar><save-dialog></save-dialog><done-dialog></done-dialog>`);
</script>
</body></html>
